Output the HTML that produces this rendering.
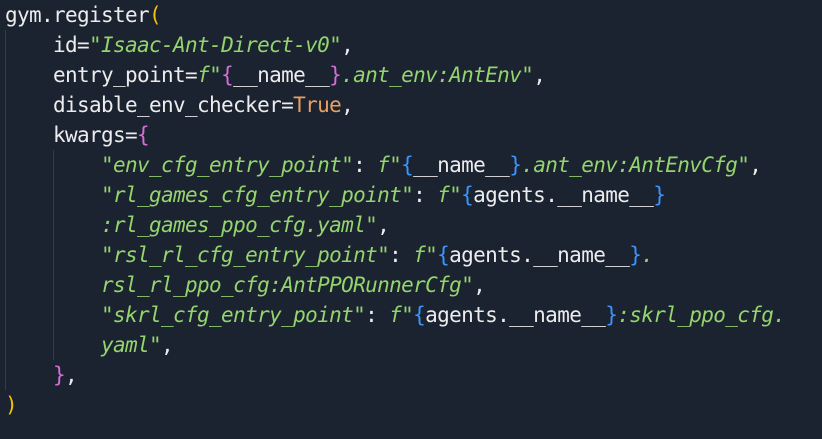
<!DOCTYPE html>
<html><head><meta charset="utf-8"><style>
html,body{margin:0;padding:0;background:#1b2230;width:822px;height:439px;overflow:hidden}
pre{margin:0;padding:0 0 0 5px;font-family:"DejaVu Sans Mono",monospace;font-size:21px;letter-spacing:-0.64px;line-height:30px;color:#ececec;position:relative;top:0;white-space:pre}
.s{color:#93d46d;font-style:italic}
.o{color:#e8a060}
.y{color:#f3c300}
.p{color:#d46fd8}
.b{color:#3a96ff}
.g{position:absolute;width:1px;background:#3d3b33}
</style></head><body>
<div class="g" style="left:5px;top:30px;height:360px"></div>
<div class="g" style="left:53px;top:150px;height:210px"></div>
<pre>gym.register<span class="y">(</span>
    id=<span class="s">"Isaac-Ant-Direct-v0"</span>,
    entry_point=<span class="s">f"</span><span class="p">{</span>__name__<span class="p">}</span><span class="s">.ant_env:AntEnv"</span>,
    disable_env_checker=<span class="o">True</span>,
    kwargs=<span class="p">{</span>
        <span class="s">"env_cfg_entry_point"</span>: <span class="s">f"</span><span class="b">{</span>__name__<span class="b">}</span><span class="s">.ant_env:AntEnvCfg"</span>,
        <span class="s">"rl_games_cfg_entry_point"</span>: <span class="s">f"</span><span class="b">{</span>agents.__name__<span class="b">}</span>
        <span class="s">:rl_games_ppo_cfg.yaml"</span>,
        <span class="s">"rsl_rl_cfg_entry_point"</span>: <span class="s">f"</span><span class="b">{</span>agents.__name__<span class="b">}</span><span class="s">.</span>
        <span class="s">rsl_rl_ppo_cfg:AntPPORunnerCfg"</span>,
        <span class="s">"skrl_cfg_entry_point"</span>: <span class="s">f"</span><span class="b">{</span>agents.__name__<span class="b">}</span><span class="s">:skrl_ppo_cfg.</span>
        <span class="s">yaml"</span>,
    <span class="p">}</span>,
<span class="y">)</span></pre>
</body></html>
